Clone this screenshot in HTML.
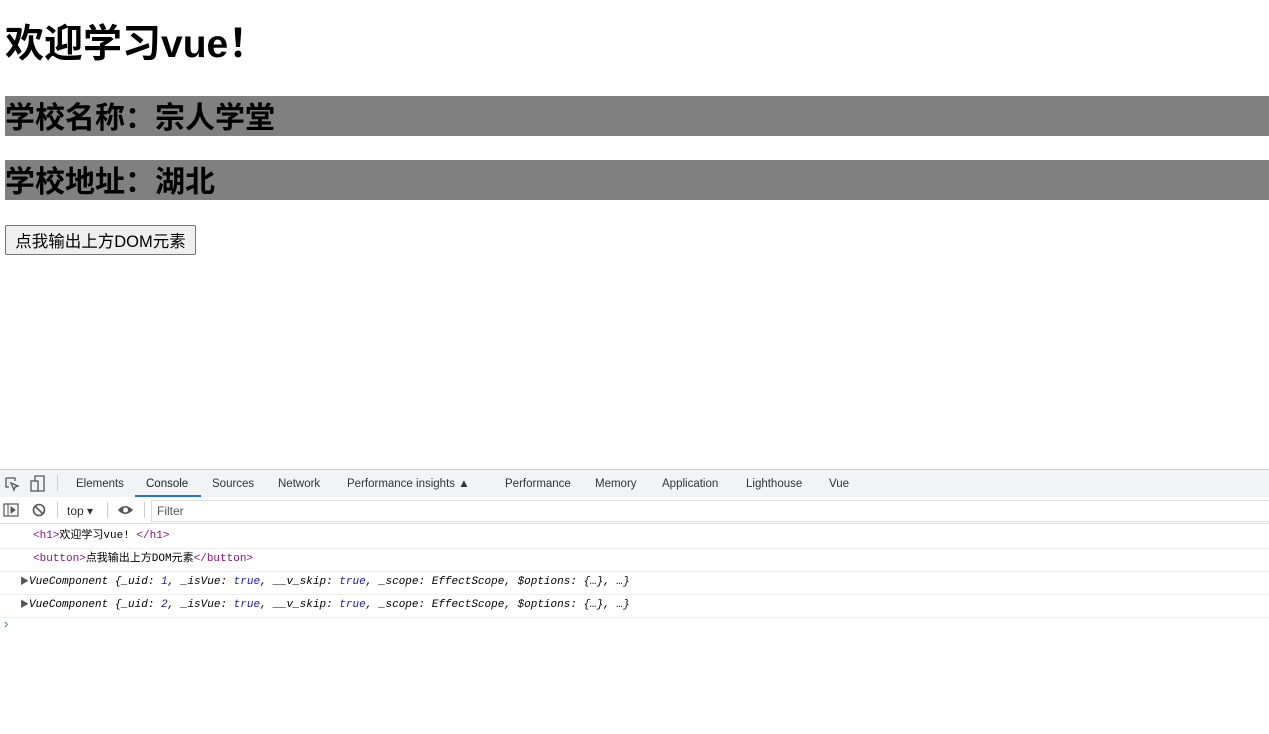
<!DOCTYPE html>
<html><head><meta charset="utf-8"><style>
body{margin:0;width:1269px;height:734px;overflow:hidden;font-family:"Liberation Sans","Noto Sans CJK SC",sans-serif;background:#fff;position:relative}
.a{position:absolute}
h1{position:absolute;left:5px;top:20px;margin:0;font-size:39px;line-height:50px;font-weight:bold}
.bar{position:absolute;left:5px;width:1264px;height:40px;background:#808080;font-size:30px;font-weight:bold;line-height:46px;overflow:hidden}
button{position:absolute;left:5px;top:225px;width:191px;height:30px;font-size:16.5px;font-family:"Liberation Sans","Noto Sans CJK SC",sans-serif;border:1px solid #767676;border-radius:2px;background:#efefef;padding:0}
.tabs{position:absolute;left:0;top:469px;width:1269px;height:27px;background:#f1f3f4;border-top:1px solid #ccc;border-bottom:1px solid #ccc;font-size:11.5px;color:#333}
.tab{position:absolute;top:8px}
.tb2{position:absolute;left:0;top:497px;width:1269px;height:26px;background:#fff;border-bottom:1px solid #ddd;font-size:12px;color:#333}
.row{position:absolute;left:0;width:1269px;height:23px;border-bottom:1px solid #eee;font-family:"Liberation Mono","Noto Sans CJK SC",monospace;font-size:11px;line-height:23px}
.t{color:#881280}.i{font-style:italic}.b{color:#1a1aa6}
</style></head><body>
<h1>欢迎学习vue！</h1>
<div class="bar" style="top:96px">学校名称：宗人学堂</div>
<div class="bar" style="top:160px">学校地址：湖北</div>
<button>点我输出上方DOM元素</button>
<div class="tabs">
<svg class="a" style="left:4px;top:6px" width="16" height="16"><path d="M2 2h9v3M2 2v9h3M7 7l7 3-3 1-1 3z" fill="none" stroke="#555" stroke-width="1.3"/></svg>
<svg class="a" style="left:30px;top:5px" width="16" height="18"><rect x="1" y="6" width="7" height="10" fill="none" stroke="#555" stroke-width="1.3"/><path d="M5 6V1h9v15H8" fill="none" stroke="#555" stroke-width="1.3"/></svg>
<div class="a" style="left:57px;top:5px;width:1px;height:16px;background:#ccc"></div>
<span class="tab" style="left:76px">Elements</span>
<span class="tab" style="left:146px;color:#222">Console</span>
<div class="a" style="left:135px;top:25px;width:66px;height:2px;background:#1a73e8"></div>
<span class="tab" style="left:212px">Sources</span>
<span class="tab" style="left:278px">Network</span>
<span class="tab" style="left:347px">Performance insights ▲</span>
<span class="tab" style="left:505px">Performance</span>
<span class="tab" style="left:595px">Memory</span>
<span class="tab" style="left:662px">Application</span>
<span class="tab" style="left:746px">Lighthouse</span>
<span class="tab" style="left:829px">Vue</span>
</div>
<div class="tb2">
<svg class="a" style="left:3px;top:6px" width="16" height="14"><rect x="1" y="1" width="14" height="12" fill="none" stroke="#555" stroke-width="1.2"/><path d="M5 1v12M8 4l4 3-4 3z" fill="#555" stroke="#555"/></svg>
<svg class="a" style="left:32px;top:6px" width="14" height="14"><circle cx="7" cy="7" r="5.5" fill="none" stroke="#555" stroke-width="1.6"/><path d="M3 3l8 8" stroke="#555" stroke-width="1.6"/></svg>
<div class="a" style="left:57px;top:5px;width:1px;height:16px;background:#ccc"></div>
<span class="a" style="left:67px;top:7px">top ▾</span>
<div class="a" style="left:107px;top:5px;width:1px;height:16px;background:#ccc"></div>
<svg class="a" style="left:117px;top:7px" width="17" height="12"><path d="M1 6Q8-2 16 6Q8 14 1 6z" fill="#555"/><circle cx="8.5" cy="6" r="2.5" fill="#fff"/></svg>
<div class="a" style="left:144px;top:5px;width:1px;height:16px;background:#ccc"></div>
<div class="a" style="left:151px;top:3px;width:1118px;height:20px;border:1px solid #ddd;border-right:0"></div>
<span class="a" style="left:157px;top:7px;color:#555">Filter</span>
</div>
<div class="row" style="top:525px"><span style="margin-left:33px"><span class="t">&lt;h1&gt;</span>欢迎学习vue! <span class="t">&lt;/h1&gt;</span></span></div>
<div class="row" style="top:548px"><span style="margin-left:33px"><span class="t">&lt;button&gt;</span>点我输出上方DOM元素<span class="t">&lt;/button&gt;</span></span></div>
<div class="row i" style="top:571px"><span style="margin-left:20px;font-style:normal;font-size:9px;color:#555">▶</span>VueComponent {_uid: <span class="b">1</span>, _isVue: <span class="b">true</span>, __v_skip: <span class="b">true</span>, _scope: EffectScope, $options: {…}, …}</div>
<div class="row i" style="top:594px"><span style="margin-left:20px;font-style:normal;font-size:9px;color:#555">▶</span>VueComponent {_uid: <span class="b">2</span>, _isVue: <span class="b">true</span>, __v_skip: <span class="b">true</span>, _scope: EffectScope, $options: {…}, …}</div>
<span class="a" style="left:4px;top:616px;color:#1a73e8;font-size:13px">›</span>
</body></html>
